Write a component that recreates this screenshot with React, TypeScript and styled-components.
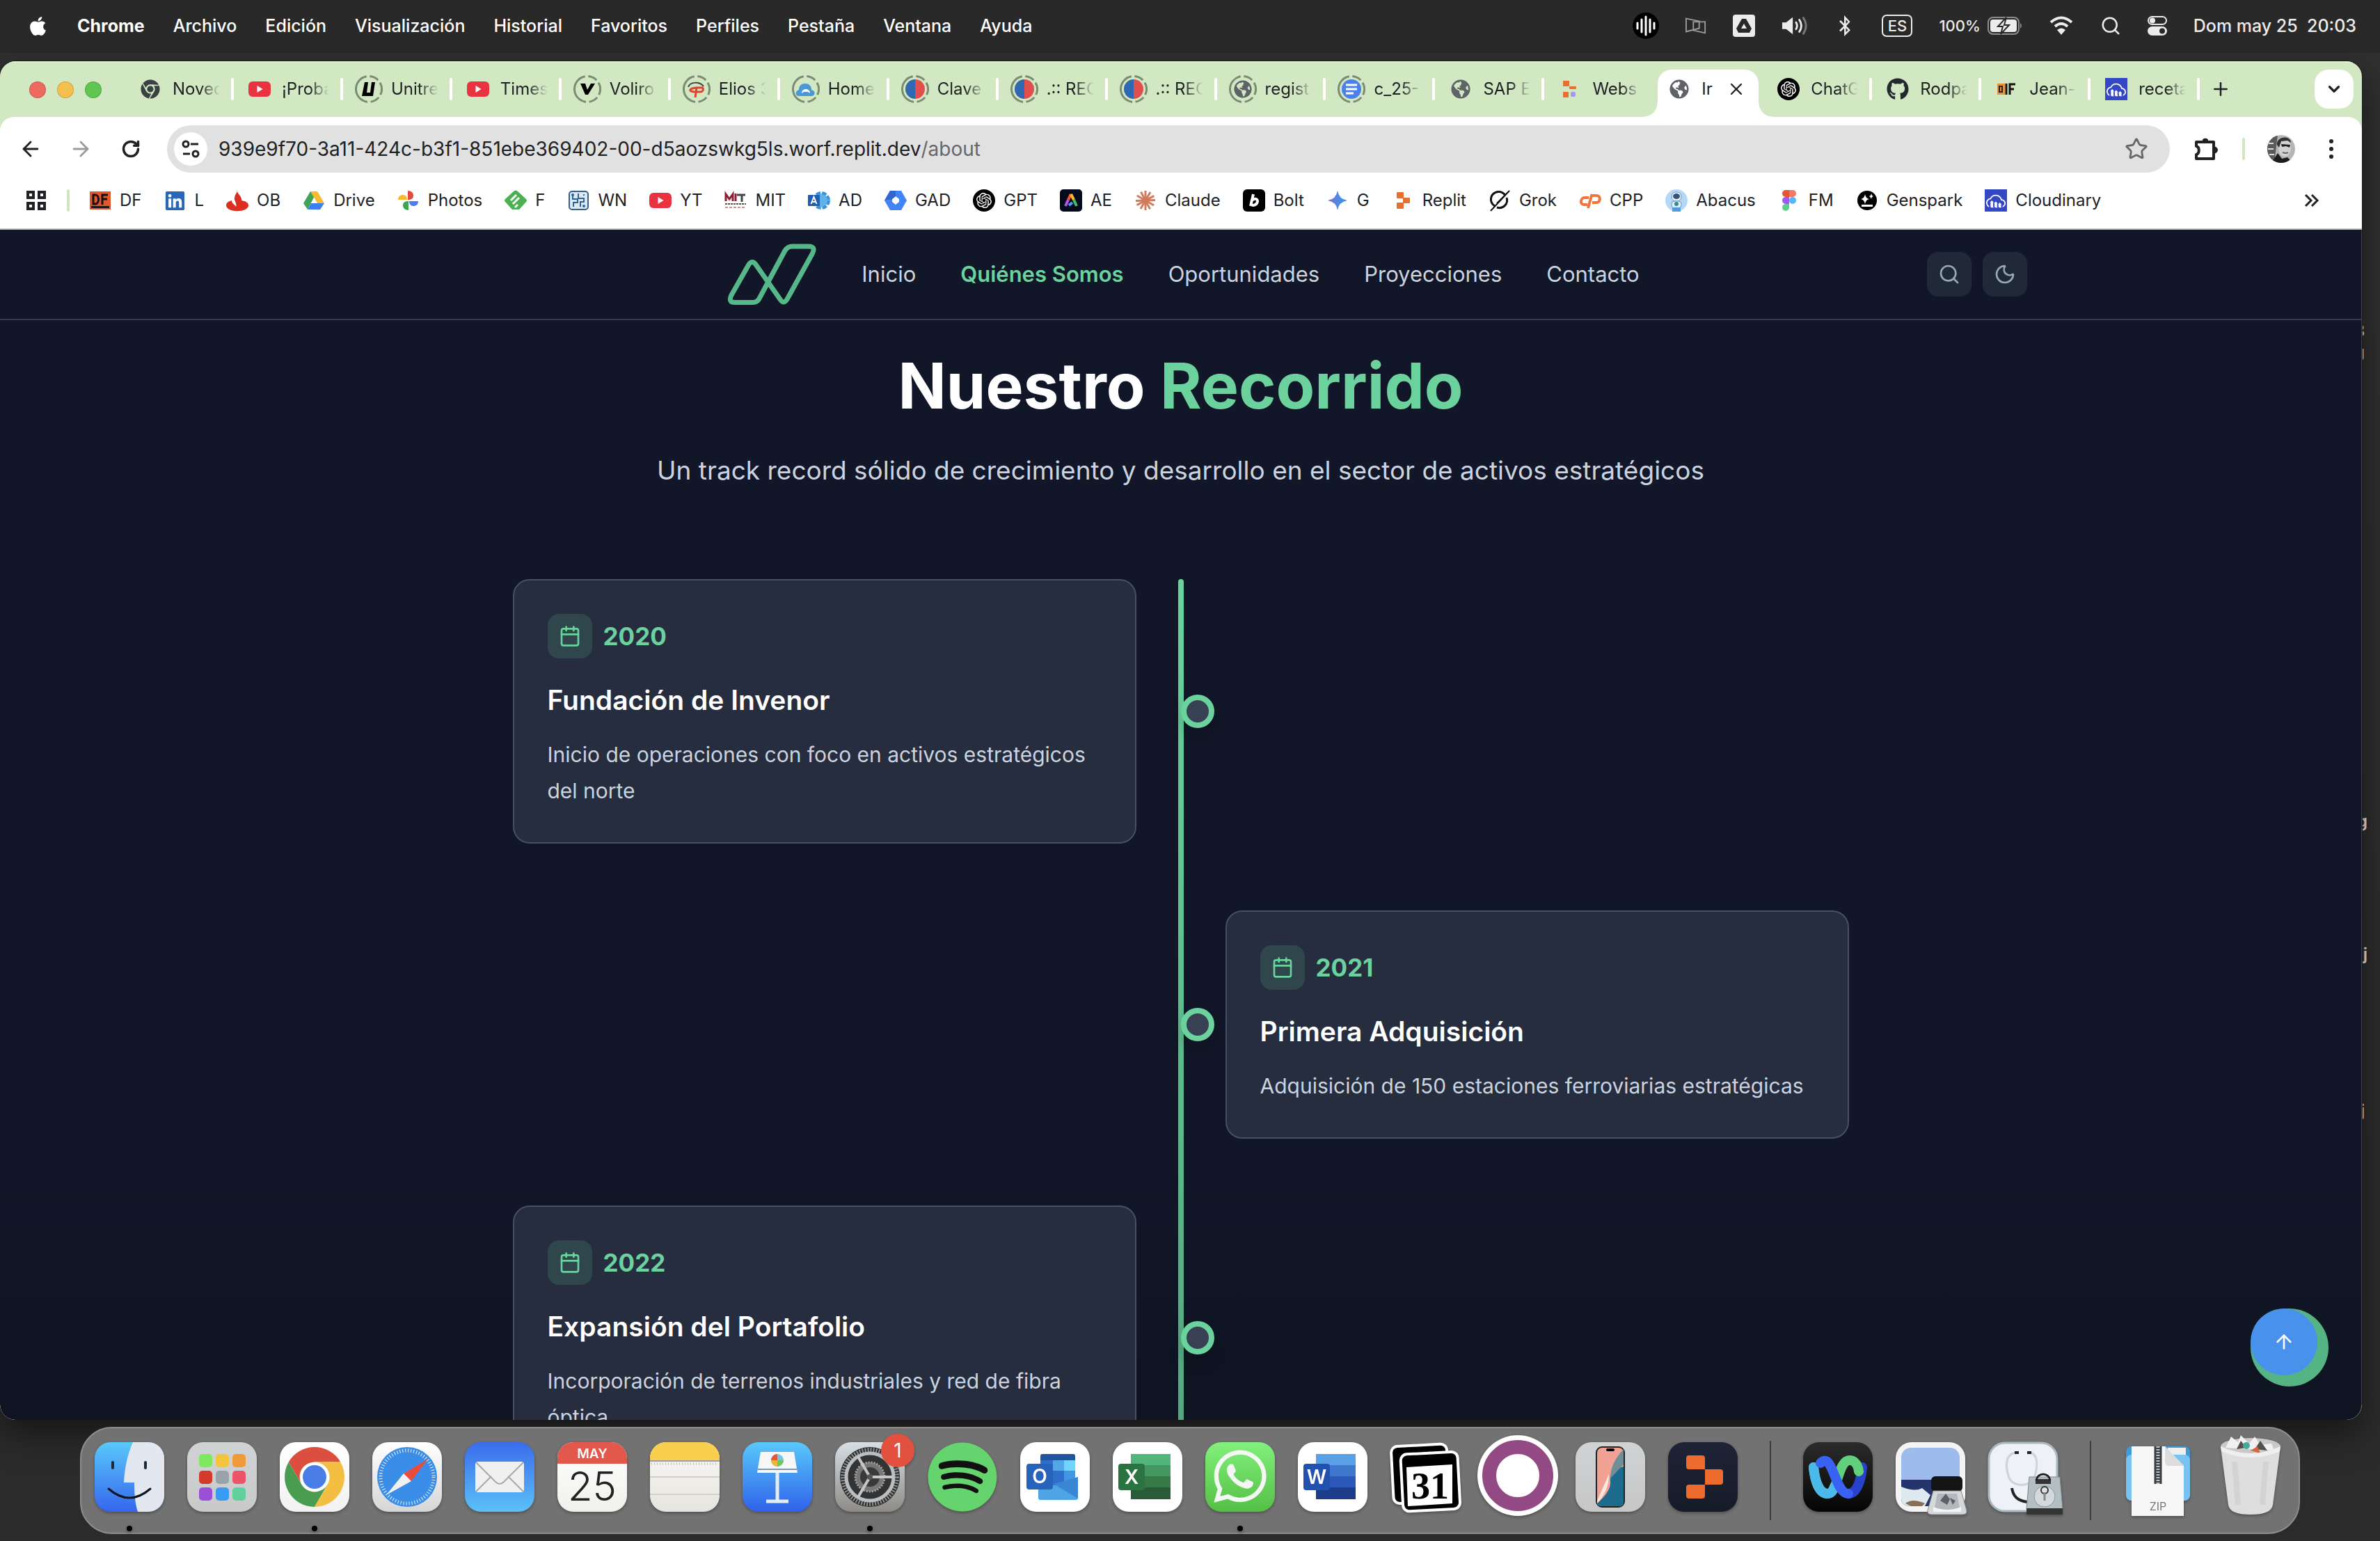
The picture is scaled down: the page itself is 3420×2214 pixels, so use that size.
import React from "react";
import styled, { createGlobalStyle } from "styled-components";
import {
  ArrowLeft,
  ArrowRight,
  ArrowUp,
  Calendar,
  ChevronDown,
  Moon,
  Plus,
  RotateCw,
  Search,
  Star,
  X,
} from "lucide-react";
import {
  FaApple,
  FaBluetoothB,
  FaChrome,
  FaGithub,
  FaGlobeAmericas,
  FaLinkedin,
  FaSpotify,
  FaWhatsapp,
} from "react-icons/fa";
import { SiCloudinary, SiOpenai } from "react-icons/si";

const GREEN = "#6bd29e";
const PAGE = "#111728";

const Global = createGlobalStyle`
  * { box-sizing: border-box; }
  html, body, #root { height: 100%; }
  body {
    margin: 0;
    overflow: hidden;
    background: #2d2d2d;
    font-family: Inter, "Liberation Sans", sans-serif;
  }
  button, input { font: inherit; color: inherit; border: 0; padding: 0; margin: 0; background: none; }
  a { color: inherit; text-decoration: none; }
  h1, h3, p { margin: 0; }
  svg { display: block; flex: none; }
`;

/* ---------- desktop ---------- */

const Desktop = styled.div`
  position: relative;
  display: flex;
  flex-direction: column;
  height: 100vh;
  padding-bottom: 10px;
  background: linear-gradient(#303030, #2d2d2d 60%, #2b2b2b);
`;

const FileLabel = styled.span<{ $y: number; $right: number }>`
  position: absolute;
  top: ${(p) => p.$y}px;
  right: ${(p) => p.$right}px;
  font-size: 24px;
  font-weight: 600;
  line-height: 28px;
  color: #e4e4e4;
`;

const MenuBar = styled.header`
  display: flex;
  align-items: center;
  justify-content: space-between;
  height: 76px;
  padding: 0 34px 2px 39px;
  background: #292929;
  color: #fff;
  font-size: 25px;
  line-height: 32px;
  flex: none;
`;

const Menus = styled.nav`
  display: flex;
  align-items: center;
  gap: 41px;
`;

const MenuButton = styled.button<{ $bold?: boolean }>`
  font-weight: ${(p) => (p.$bold ? 700 : 500)};
  white-space: nowrap;
`;

const Status = styled.div`
  display: flex;
  align-items: center;
  gap: 38px;
  color: #ececec;
`;

const InputSource = styled.span`
  width: 44px;
  height: 32px;
  border: 2px solid #ececec;
  border-radius: 7px;
  font-size: 22px;
  font-weight: 500;
  line-height: 28px;
  text-align: center;
`;

const Battery = styled.span`
  display: flex;
  align-items: center;
  gap: 10px;
  font-size: 22px;
  font-weight: 500;
`;

const Clock = styled.time`
  font-weight: 500;
  white-space: pre;
`;

/* ---------- browser window ---------- */

const Window = styled.section`
  position: relative;
  display: flex;
  flex-direction: column;
  flex: 1;
  min-height: 0;
  margin: 12px 26px 10px 0;
  border-radius: 22px;
  overflow: hidden;
  background: #d2e8c3;
  box-shadow: 0 0 0 1px #1a1a1a, 0 20px 50px rgba(0, 0, 0, 0.5);
`;

const TabStrip = styled.div`
  display: flex;
  height: 80px;
  padding: 10px 12px 0 42px;
  border-top: 2px solid #e3f1da;
  flex: none;
`;

const Lights = styled.div`
  display: flex;
  align-items: center;
  gap: 16px;
  height: 58px;
  margin-right: 31px;
`;

const Light = styled.button<{ $c: string }>`
  width: 24px;
  height: 24px;
  border-radius: 50%;
  background: ${(p) => p.$c};
  box-shadow: inset 0 0 0 1px rgba(0, 0, 0, 0.15);
`;

const Tabs = styled.div`
  display: flex;
  flex: 1;
  max-width: 2982px;
`;

const TabCell = styled.div`
  position: relative;
  display: flex;
  flex: 1 1 0;
  min-width: 0;
  height: 68px;
`;

const Tab = styled.button<{ $active?: boolean; $line?: boolean }>`
  position: relative;
  display: flex;
  align-items: center;
  flex: 1;
  min-width: 0;
  height: 68px;
  margin: ${(p) => (p.$active ? "0 4px 0 8px" : "0")};
  padding: 0 ${(p) => (p.$active ? 18 : 16)}px 12px ${(p) => (p.$active ? 15 : 23)}px;
  gap: 16px;
  border-radius: 20px 20px 0 0;
  background: ${(p) => (p.$active ? "#fff" : "transparent")};
  color: #202124;
  text-align: left;

  &::after {
    content: "";
    display: ${(p) => (p.$line ? "block" : "none")};
    width: 4px;
    height: 32px;
    margin-right: -18px;
    border-radius: 2px;
    background: #fff;
    flex: none;
  }
`;

const Flare = styled.i<{ $side: "left" | "right" }>`
  position: absolute;
  bottom: 0;
  width: 20px;
  height: 20px;
  ${(p) => (p.$side === "left" ? "left: -12px;" : "right: -16px;")}
  background: radial-gradient(
    circle at ${(p) => (p.$side === "left" ? "0 0" : "100% 0")},
    transparent 19px,
    #fff 20px
  );
`;

const Favicon = styled.span`
  display: flex;
  align-items: center;
  justify-content: center;
  width: 32px;
  height: 32px;
  flex: none;
`;

const TabTitle = styled.span`
  flex: 1;
  min-width: 0;
  overflow: hidden;
  white-space: nowrap;
  font-size: 24px;
  line-height: 32px;
  mask-image: linear-gradient(to right, #000 calc(100% - 28px), transparent);
`;

const ShortTitle = styled(TabTitle)`
  mask-image: none;
`;

const StripButton = styled.button<{ $filled?: boolean }>`
  display: flex;
  align-items: center;
  justify-content: center;
  width: 56px;
  height: 56px;
  margin-left: ${(p) => (p.$filled ? "auto" : "4px")};
  border-radius: 20px;
  background: ${(p) => (p.$filled ? "#fff" : "transparent")};
  color: #202124;
`;

const Chrome = styled.div`
  flex: none;
  border-radius: 20px 20px 0 0;
  border-bottom: 2px solid #c9c9c9;
  background: #fff;
  color: #202124;
`;

const Toolbar = styled.div`
  display: flex;
  align-items: center;
  height: 92px;
  padding: 0 24px;
`;

const ToolButton = styled.button<{ $dim?: boolean }>`
  display: flex;
  align-items: center;
  justify-content: center;
  width: 40px;
  height: 40px;
  color: ${(p) => (p.$dim ? "#9a9b9d" : "#202124")};
`;

const NavButtons = styled.div`
  display: flex;
  gap: 32px;
  margin-right: 32px;
`;

const UrlBar = styled.div`
  display: flex;
  align-items: center;
  flex: 1;
  height: 68px;
  padding: 0 28px 0 10px;
  border-radius: 34px;
  background: #e1e1e1;
  font-size: 28px;
`;

const SiteInfo = styled.button`
  display: flex;
  align-items: center;
  justify-content: center;
  width: 48px;
  height: 48px;
  margin-right: 16px;
  border-radius: 50%;
  background: #fff;
`;

const UrlInput = styled.input`
  field-sizing: content;
  outline: none;
`;

const UrlPath = styled.span`
  flex: 1;
  color: #66686b;
`;

const ToolRight = styled.div`
  display: flex;
  align-items: center;
  gap: 32px;
  padding-left: 32px;
`;

const Divider = styled.i`
  width: 4px;
  height: 32px;
  border-radius: 2px;
  background: #cfe6bf;
  flex: none;
`;

const Bookmarks = styled.nav`
  display: flex;
  align-items: center;
  gap: 28px;
  height: 68px;
  padding: 0 60px 12px 36px;
  font-size: 24px;
  line-height: 32px;
`;

const BookmarkList = styled.div`
  display: flex;
  align-items: center;
  flex: 1;
  gap: 32px;
`;

const Bookmark = styled.a`
  display: flex;
  align-items: center;
  gap: 12px;
  white-space: nowrap;
`;

/* ---------- site ---------- */

const Page = styled.main`
  position: relative;
  display: flex;
  flex-direction: column;
  flex: 1;
  min-height: 0;
  overflow: hidden;
  border-right: 1px solid #3a4256;
  border-radius: 0 0 22px 22px;
  background: linear-gradient(${PAGE} 80%, #0f1422);
  color: #fff;
`;

const SiteHeader = styled.header`
  flex: none;
  border-bottom: 2px solid #333c4d;
`;

const HeaderInner = styled.div`
  display: grid;
  grid-template-columns: 1fr auto 1fr;
  align-items: center;
  width: 100%;
  max-width: 2432px;
  height: 128px;
  margin: 0 auto;
`;

const Brand = styled.div`
  display: flex;
  align-items: center;
  grid-column: 2;
  gap: 64px;
  padding-left: 8px;
`;

const SiteNav = styled.nav`
  display: flex;
  gap: 64px;
  font-size: 31px;
  line-height: 48px;
`;

const NavLink = styled.a<{ $active?: boolean }>`
  color: ${(p) => (p.$active ? GREEN : "#cbd3df")};
  font-weight: ${(p) => (p.$active ? 600 : 400)};
`;

const HeaderTools = styled.div`
  display: flex;
  justify-content: flex-end;
  gap: 16px;
`;

const IconButton = styled.button`
  display: flex;
  align-items: center;
  justify-content: center;
  width: 64px;
  height: 64px;
  border-radius: 16px;
  background: #1f2938;
  color: #9aa5b5;
`;

const Section = styled.section`
  display: flex;
  flex-direction: column;
  align-items: center;
  flex: 1;
  min-height: 0;
  padding-top: 46px;
`;

const Heading = styled.h1`
  margin-bottom: 46px;
  font-size: 91px;
  font-weight: 700;
  line-height: 96px;
`;

const Accent = styled.span`
  color: ${GREEN};
`;

const Lead = styled.p`
  margin-bottom: 128px;
  color: #cbd3df;
  font-size: 37px;
  line-height: 56px;
`;

const Timeline = styled.ol`
  position: relative;
  display: flex;
  flex-direction: column;
  gap: 96px;
  width: 100%;
  max-width: 1920px;
  margin: 0;
  padding: 0 0 96px;
  list-style: none;

  &::before {
    content: "";
    position: absolute;
    top: 0;
    bottom: 0;
    left: calc(50% - 4px);
    width: 8px;
    border-radius: 4px;
    background: linear-gradient(${GREEN}, #4ea57a);
  }
`;

const Milestone = styled.li<{ $right?: boolean }>`
  position: relative;
  display: flex;
  justify-content: ${(p) => (p.$right ? "flex-end" : "flex-start")};
`;

const Dot = styled.i`
  position: absolute;
  top: calc(50% - 24px);
  left: 50%;
  width: 48px;
  height: 48px;
  border: 8px solid ${GREEN};
  border-radius: 50%;
  background: #374153;
  box-shadow: 0 12px 24px rgba(0, 0, 0, 0.18);
`;

const Card = styled.article`
  width: calc(50% - 64px);
  padding: 48px;
  border: 2px solid #465062;
  border-radius: 24px;
  background: #252d3f;
`;

const CardTop = styled.div`
  display: flex;
  align-items: center;
  gap: 16px;
  margin-bottom: 32px;
  color: ${GREEN};
`;

const IconTile = styled.span`
  display: flex;
  align-items: center;
  justify-content: center;
  width: 64px;
  height: 64px;
  border-radius: 16px;
  background: #2e464c;
`;

const Year = styled.span`
  font-size: 35px;
  font-weight: 700;
  line-height: 56px;
`;

const CardTitle = styled.h3`
  margin-bottom: 24px;
  font-size: 39px;
  font-weight: 600;
  line-height: 56px;
`;

const CardText = styled.p`
  color: #cbd3df;
  font-size: 30px;
  line-height: 52px;
`;

const TopRing = styled.div`
  position: absolute;
  right: 47px;
  bottom: 48px;
  width: 112px;
  height: 112px;
  border-radius: 50%;
  background: #56b384;
`;

const TopButton = styled.button`
  display: flex;
  align-items: center;
  justify-content: center;
  width: 96px;
  height: 96px;
  border-radius: 50%;
  background: #4992ec;
  color: #fff;
`;

/* ---------- dock ---------- */

const Dock = styled.footer`
  position: relative;
  display: flex;
  align-items: flex-start;
  align-self: center;
  gap: 33px;
  height: 154px;
  padding: 20px 19px 0;
  border: 2px solid #8c8c8c;
  border-radius: 46px;
  background: #727272;
  flex: none;
`;

const DockItem = styled.button<{ $open?: boolean }>`
  position: relative;
  display: flex;
  flex-direction: column;
  align-items: center;
  gap: 20px;
  width: 100px;
  filter: drop-shadow(0 2px 2px rgba(0, 0, 0, 0.3));

  > svg { overflow: visible; }

  &::after {
    content: "";
    width: 8px;
    height: 8px;
    border-radius: 50%;
    background: ${(p) => (p.$open ? "#000" : "transparent")};
  }
`;

const DockRule = styled.i`
  width: 2px;
  height: 114px;
  margin: -2px 13px 0;
  background: #3e3e3e;
`;

const Badge = styled.span`
  position: absolute;
  top: -12px;
  right: -14px;
  width: 48px;
  height: 48px;
  border-radius: 50%;
  background: #e25140;
  color: #fff;
  font-size: 28px;
  line-height: 48px;
  text-align: center;
`;

/* ---------- drawings ---------- */

type SvgBoxProps = { w?: number; h?: number; vb?: string; children: React.ReactNode };
const Svg = ({ w = 32, h = w, vb = "0 0 32 32", children }: SvgBoxProps) => (
  <svg width={w} height={h} viewBox={vb} fill="none" aria-hidden="true">
    {children}
  </svg>
);

const YouTubeMark = () => (
  <Svg>
    <rect y="5" width="32" height="22" rx="6" fill="#ea3340" />
    <path d="M12.500 11v10l8-5z" fill="#fff" />
  </Svg>
);

const Replit = () => (
  <Svg>
    <rect x="7" y="4" width="10" height="9" rx="1" fill="#e8702f" />
    <rect x="16" y="12" width="10" height="8" rx="1" fill="#e8702f" />
    <rect x="7" y="19" width="10" height="9" rx="1" fill="#e8702f" />
  </Svg>
);

const ReplitTab = () => (
  <Svg>
    <rect x="6" y="4" width="9" height="8" rx="1" fill="#e8702f" />
    <rect x="15" y="12" width="10" height="4" rx="1" fill="#e8702f" />
    <rect x="6" y="20" width="8" height="8" rx="1" fill="#e8702f" />
    <rect x="17" y="20" width="7" height="7" rx="2" fill="#a996f0" />
  </Svg>
);

const Cloudinary = () => (
  <Svg>
    <rect width="32" height="32" fill="#3448c5" />
    <svg x="2" y="3" width="28" height="28" viewBox="0 0 28 28">
      <SiCloudinary size={28} color="#fff" />
    </svg>
  </Svg>
);

const Gpt = () => (
  <Svg>
    <circle cx="16" cy="16" r="16" fill="#000" />
    <svg x="5" y="5" width="22" height="22" viewBox="0 0 22 22">
      <SiOpenai size={22} color="#fff" />
    </svg>
  </Svg>
);

const Ringed = ({ children }: { children: React.ReactNode }) => (
  <Svg w={40} vb="0 0 40 40">
    <circle
      cx="20"
      cy="20"
      r="18.500"
      stroke="#7c8b73"
      strokeWidth="3"
      pathLength={360}
      strokeDasharray="42 14 164 14 42 14 56 14"
      transform="rotate(40 20 20)"
    />
    {children}
  </Svg>
);

const UnitreeMark = () => (
  <Ringed>
    <path d="M14 10h5l-2 15h5l2-15h5l-3 20H10z" fill="#000" />
  </Ringed>
);
const VoliroMark = () => (
  <Ringed>
    <path d="M10 12h7l3 9 5-9h6l-10 16h-4z" fill="#000" />
  </Ringed>
);
const EliosMark = () => (
  <Ringed>
    <path d="M8 17c3-8 16-8 22-1" stroke="#444" strokeWidth="2" />
    <path d="M30 18H20c-12 1-12 6-2 6h7c5 0 6-6 2-6M20 18l-2 14" stroke="#e0432f" strokeWidth="3" />
  </Ringed>
);
const HomeMark = () => (
  <Ringed>
    <path d="M9 30c-5-1-4-8 1-9 0-6 4-9 9-9 6 0 9 4 9 9 6 1 6 8 1 9z" fill="#4a97d6" />
    <path d="M14 26c0-4 3-6 6-6s6 2 6 6l-3-2h-6z" fill="#fff" />
  </Ringed>
);
const ClaveMark = () => (
  <Ringed>
    <path d="M20 6a14 14 0 0 0 0 28z" fill="#2f68b1" />
    <path d="M20 6a14 14 0 0 1 0 28z" fill="#e04f4b" />
  </Ringed>
);
const GlobeRing = () => (
  <Ringed>
    <svg x="7" y="7" width="26" height="26" viewBox="0 0 26 26">
      <FaGlobeAmericas size={26} color="#5f6368" />
    </svg>
  </Ringed>
);
const DocMark = () => (
  <Ringed>
    <circle cx="20" cy="20" r="14" fill="#4a80ee" />
    <path d="M12 14h16M12 20h16M12 26h11" stroke="#fff" strokeWidth="3" />
  </Ringed>
);
const JeanMark = () => (
  <Svg>
    <rect x="2" y="8" width="11" height="16" fill="#e8923a" />
    <path d="M5 12h4v8H5z" stroke="#222" strokeWidth="2" />
    <path d="M15 8v16M20 24V9h8M20 16h6" stroke="#111" strokeWidth="3" />
  </Svg>
);
const Globe = () => <FaGlobeAmericas size={28} color="#5f6368" />;

const DfMark = () => (
  <Svg>
    <rect x="1" y="3" width="30" height="26" fill="#e4572e" />
    <path d="M6 8v13h3c6 0 6-13 0-13zM19 22V8h8M19 14h7" stroke="#111" strokeWidth="3" />
    <rect x="3" y="24" width="26" height="3" fill="#1b1b1b" />
  </Svg>
);
const FlameMark = () => (
  <Svg>
    <path d="M16 0c-2 6 7 9 6 16 6 1 10 3 10 7 0 11-32 11-32 0 0-4 4-6 8-7 0 5 5 6 6 9 2-5-3-8-2-13 1-6 4-6 4-12z" fill="#dc2f21" />
  </Svg>
);
const DriveMark = () => (
  <Svg>
    <path d="M11 3h10l-5 9-9 17-6-9z" fill="#3fa457" />
    <path d="M11 3h10l10 17H21z" fill="#f6bb2d" />
    <path d="M7 29l5-9h19l-6 9z" fill="#3f7ef0" />
    <path d="M16 12l5 8h-9z" fill="#fff" />
  </Svg>
);
const PhotosMark = () => (
  <Svg>
    <path d="M15 2c5 0 8 3 8 7s-3 6-8 6z" fill="#e4493b" />
    <path d="M30 17c0 5-3 7-7 7s-6-3-6-7z" fill="#4680ee" />
    <path d="M16 30c-5 0-8-3-8-7s3-6 8-6z" fill="#3fa457" />
    <path d="M1 15c0-5 3-7 7-7s6 3 6 7z" fill="#f6bb2d" />
  </Svg>
);
const FeedlyMark = () => (
  <Svg>
    <path d="M13 3q3-3 6 0l12 11q2 2 0 4L21 29H11L1 18q-2-2 0-4z" fill="#4caf50" />
    <path d="M9 16l8-8M12 21l9-9M15 26l4-4" stroke="#fff" strokeWidth="3" />
  </Svg>
);
const CircuitMark = () => (
  <Svg>
    <rect x="3" y="3" width="27" height="26" rx="4" fill="#dce9f4" stroke="#33618d" strokeWidth="2" />
    <path d="M8 8v6h7v5H9v6M16 6v7h8v5h-5v7M24 7v2" stroke="#33618d" strokeWidth="2" />
    <circle cx="8" cy="8" r="2" fill="#33618d" />
    <circle cx="24" cy="24" r="2" fill="#33618d" />
  </Svg>
);
const MitMark = () => (
  <Svg>
    <path d="M2 17V7l5 7 5-7v10M16 6v11" stroke="#8a1f35" strokeWidth="3" />
    <path d="M18 8h12M25 8v10" stroke="#444" strokeWidth="3" />
    <path d="M1 21h30" stroke="#555" strokeWidth="2" strokeDasharray="3 1" />
    <path d="M1 26h30" stroke="#d98b8b" strokeWidth="2" strokeDasharray="4 2" />
  </Svg>
);
const AzureMark = () => (
  <Svg>
    <circle cx="19" cy="16" r="10" fill="#8fc6ee" stroke="#3a93dc" strokeWidth="6" strokeDasharray="6 2" />
    <circle cx="19" cy="16" r="9" fill="#5fb2ea" />
    <rect y="8" width="17" height="16" rx="1" fill="#1d5fb0" />
    <path d="M4.500 21L8.500 11l4 10M6 18h5" stroke="#fff" strokeWidth="2" />
  </Svg>
);
const HexMark = () => (
  <Svg>
    <path fillRule="evenodd" d="M8 2h16l8 14-8 14H8L0 16zM16 10l-5 4v4l5 4 5-4v-4z" fill="#4284f3" />
    <path d="M8 2h8v8l-5 4-11 2z" fill="#2f66d0" />
  </Svg>
);
const AeMark = () => (
  <Svg>
    <rect width="32" height="32" rx="5" fill="#050a1c" />
    <path d="M16 7l-4 8" stroke="#f5552e" strokeWidth="4" />
    <path d="M12 15l-4 9" stroke="#b457e8" strokeWidth="4" />
    <path d="M16 7l4 8" stroke="#f6b82f" strokeWidth="4" />
    <path d="M20 15l4 9" stroke="#3fc06a" strokeWidth="4" />
    <path d="M13 23l5-4" stroke="#4a9bf5" strokeWidth="4" />
  </Svg>
);
const ClaudeMark = () => (
  <Svg>
    {[0, 30, 62, 88, 120, 152].map((a) => (
      <path key={a} d="M16 2v28" stroke="#d07b5b" strokeWidth="3" transform={`rotate(${a} 16 16)`} />
    ))}
  </Svg>
);
const BoltMark = () => (
  <Svg>
    <rect width="32" height="32" rx="6" fill="#000" />
    <path d="M15 7l-4 17M12 19c1-6 9-7 9-2s-7 8-10 4" stroke="#fff" strokeWidth="4" />
  </Svg>
);
const GeminiMark = () => (
  <Svg>
    <defs>
      <linearGradient id="gem" x1="0" x2="1">
        <stop stopColor="#7f6fc4" />
        <stop offset="0.6" stopColor="#4a8be6" />
      </linearGradient>
    </defs>
    <path d="M16 2q2 12 14 14-12 2-14 14-2-12-14-14 12-2 14-14z" fill="url(#gem)" />
  </Svg>
);
const GrokMark = () => (
  <Svg>
    <path d="M24 9A11 11 0 1 0 9 24M12 26A11 11 0 0 0 26 12" stroke="#111" strokeWidth="3" />
    <path d="M3 31L30 2 12 20" stroke="#111" strokeWidth="2" />
  </Svg>
);
const CpMark = () => (
  <Svg>
    <path d="M14 12H8c-6 0-7 10-1 10h5M13 27l5-18h7c7 0 6 10 0 10h-6" stroke="#f0743c" strokeWidth="4" />
  </Svg>
);
const AbacusMark = () => (
  <Svg>
    <circle cx="16" cy="16" r="16" fill="#b5d8f6" />
    <rect x="9" y="4" width="14" height="13" rx="6" fill="#eef5fb" stroke="#6c93bb" />
    <ellipse cx="16" cy="10" rx="5" ry="4" fill="#33527c" />
    <rect x="9" y="17" width="14" height="10" rx="4" fill="#e4eef8" stroke="#6c93bb" />
    <circle cx="16" cy="21" r="3" fill="#2b8f8a" />
    <path d="M10 26h12v6H10z" fill="#4d9be0" />
  </Svg>
);
const FigmaMark = () => (
  <Svg>
    <path d="M16 1h-5a5 5 0 0 0 0 10h5z" fill="#e4572e" />
    <path d="M16 1h5a5 5 0 0 1 0 10h-5z" fill="#f0776a" />
    <path d="M16 11h-5a5 5 0 0 0 0 10h5z" fill="#9a5cf5" />
    <circle cx="21" cy="16" r="5" fill="#55b6f8" />
    <path d="M16 21h-5a5 5 0 1 0 5 5z" fill="#5ccf8b" />
  </Svg>
);
const GensparkMark = () => (
  <Svg>
    <circle cx="16" cy="16" r="14" fill="#000" />
    <path d="M13 7q1 6 6 7-5 1-6 7-1-6-6-7 5-1 6-7zM22 6q.500 3 3 4-2.500.500-3 4-.500-3-3-4 2.500-.500 3-4zM8 22h16v3H8z" fill="#fff" />
  </Svg>
);

const Apps = () => (
  <Svg w={32}>
    <path d="M4 4h8v8H4zM20 4h8v8h-8zM4 20h8v8H4zM20 20h8v8h-8z" stroke="#202124" strokeWidth="4" />
  </Svg>
);

const Tune = () => (
  <Svg w={32}>
    <g stroke="#202124" strokeWidth="3">
      <circle cx="9" cy="9" r="4" />
      <path d="M16 9h11M5 23h10" />
      <circle cx="23" cy="23" r="4" />
    </g>
  </Svg>
);

const Puzzle = () => (
  <Svg w={36} vb="0 0 36 36">
    <path d="M4 8h25v24H4v-6c5-1 5-11 0-12z" stroke="#202124" strokeWidth="4" strokeLinejoin="round" />
    <path d="M13 7a4 4 0 0 1 8 0zM30 15a4 4 0 0 1 0 9z" fill="#202124" stroke="#202124" />
  </Svg>
);

const Portrait = () => (
  <Svg w={40} vb="0 0 40 40">
    <defs>
      <clipPath id="face">
        <circle cx="20" cy="20" r="20" />
      </clipPath>
    </defs>
    <g clipPath="url(#face)">
      <rect width="40" height="40" fill="#b5b5b5" />
      <path d="M0 0h15L10 40H0z" fill="#5a5a5a" />
      <path d="M2 12h7M1 20h8M3 28h7" stroke="#ddd" strokeWidth="2" />
      <ellipse cx="25" cy="18" rx="9" ry="13" fill="#d2d2d2" />
      <path d="M14 14C13 1 34 0 34 11l-5-3-9 1-3 9z" fill="#333" />
      <path d="M20 13l13 1-1 4-5-2-6 1z" fill="#222" />
      <path d="M22 25q5 2 8 0" stroke="#666" strokeWidth="2" />
      <path d="M6 40l9-14 6 8 8-2 8 8z" fill="#1c1c1c" />
    </g>
  </Svg>
);

const Kebab = () => (
  <Svg w={32}>
    <g fill="#202124">
      <circle cx="16" cy="5" r="3" />
      <circle cx="16" cy="16" r="3" />
      <circle cx="16" cy="27" r="3" />
    </g>
  </Svg>
);

const BrandMark = () => (
  <Svg w={129} h={89} vb="0 0 129 89">
    <path
      d="M93 4H117Q128 4 122 15L86 80Q81 88 76 80L41 30Q36 23 31 30L6 74Q1 84.500 11 84.500H37Q43 84.500 46 79L83 10Q87 4 93 4Z"
      stroke="#56b888"
      strokeWidth="7"
      strokeLinejoin="round"
    />
  </Svg>
);

/* menu bar glyphs */
const Wave = () => (
  <Svg w={38} vb="0 0 38 38">
    <circle cx="19" cy="19" r="19" fill="#000" />
    <path d="M7 15v8M13 10v18M19 6v26M25 10v18M31 15v8" stroke="#fff" strokeWidth="3" strokeLinecap="round" />
  </Svg>
);
const Frames = () => (
  <Svg w={30}>
    <path d="M1 5l20 4v11L1 25zM12 10h18v17l-18-4z" stroke="#9c9c9c" strokeWidth="2" />
  </Svg>
);
const DriveTray = () => (
  <Svg>
    <rect width="32" height="32" rx="4" fill="#ececec" />
    <path d="M13 6h6l8 14-3 6H8l-3-6z" fill="#292929" />
    <path d="M16 13l4 7h-8z" fill="#ececec" />
  </Svg>
);
const Volume = () => (
  <Svg w={38} h={32} vb="0 0 40 32">
    <path d="M1 11h6l10-8v26L7 21H1z" fill="#ececec" />
    <path d="M22 11q3 5 0 10M27 7q6 9 0 18" stroke="#ececec" strokeWidth="3" strokeLinecap="round" />
    <path d="M33 4q8 12 0 24" stroke="#777" strokeWidth="3" strokeLinecap="round" />
  </Svg>
);
const BatteryIcon = () => (
  <Svg w={50} h={26} vb="0 0 50 26">
    <rect x="1" y="1" width="44" height="24" rx="7" stroke="#8d8d8d" strokeWidth="2" />
    <rect x="4" y="4" width="38" height="18" rx="4" fill="#ececec" />
    <path d="M47 9q4 4 0 8z" fill="#8d8d8d" />
    <path d="M27 1L15 14h7l-3 11 12-13h-7z" fill="#ececec" stroke="#292929" strokeWidth="2" />
  </Svg>
);
const Wifi = () => (
  <Svg w={36} h={28} vb="0 0 36 28">
    <path d="M3 9q15-13 30 0M9 15q9-8 18 0" stroke="#ececec" strokeWidth="4" />
    <path d="M12 20q6-5 12 0l-6 7z" fill="#ececec" />
  </Svg>
);
const Toggles = () => (
  <Svg w={28} vb="0 0 28 28">
    <rect x="1" y="1" width="26" height="11" rx="5.500" stroke="#ececec" strokeWidth="2" />
    <circle cx="7" cy="6.500" r="4" fill="#ececec" />
    <rect y="15" width="28" height="13" rx="6.500" fill="#ececec" />
    <circle cx="21" cy="21.500" r="4" fill="#292929" />
  </Svg>
);

/* dock glyphs */
type Grad = { id: string; a: string; b: string };
const Vertical = ({ id, a, b }: Grad) => (
  <linearGradient id={id} x1="0" y1="0" x2="0" y2="1">
    <stop stopColor={a} />
    <stop offset="1" stopColor={b} />
  </linearGradient>
);

const Tile = ({ id, a, b, children }: Grad & { children?: React.ReactNode }) => (
  <Svg w={100} vb="0 0 100 100">
    <defs>
      <Vertical id={id} a={a} b={b} />
      <clipPath id={id + "-clip"}>
        <rect width="100" height="100" rx="23" />
      </clipPath>
    </defs>
    <g clipPath={`url(#${id}-clip)`}>
      <rect width="100" height="100" fill={`url(#${id})`} />
      {children}
    </g>
  </Svg>
);

const Finder = () => (
  <Tile id="finder" a="#5ac8fa" b="#3566ee">
    <path d="M55 0C47 18 43 38 42 58h15c0 16 1 30 5 42h38V0z" fill="#e3e8f0" />
    <path d="M26 29v8M73 29v8" stroke="#1c2a3a" strokeWidth="4" strokeLinecap="round" />
    <path d="M20 67q30 26 60 0" stroke="#0d1722" strokeWidth="3" strokeLinecap="round" />
  </Tile>
);

const pads = ["#7ee85f", "#f3c53c", "#ef9a36", "#d43a2a", "#9aa4a8", "#ec5468", "#9a4fd6", "#3a9bf5", "#62cf9f"];
const Launchpad = () => (
  <Tile id="launch" a="#d0d3d5" b="#c9c9c9">
    {pads.map((c, i) => (
      <rect key={c} x={17 + (i % 3) * 24} y={17 + Math.floor(i / 3) * 24} width="19" height="19" rx="5" fill={c} />
    ))}
  </Tile>
);

const ChromeApp = () => (
  <Tile id="chrome" a="#ffffff" b="#f2f2f2">
    <g transform="translate(50 50)">
      <path d="M37.200-21.500A43 43 0 0 0-37.200-21.500L-18.600 10.700 0 0V-21.500z" fill="#dc4e3e" />
      <path d="M-37.200-21.500A43 43 0 0 0 0 43L18.600 10.700 0 0-18.600 10.700z" fill="#4a9c51" />
      <path d="M0 43A43 43 0 0 0 37.200-21.500H0V0L18.600 10.700z" fill="#f3bf42" />
      <circle r="21.500" fill="#fff" />
      <circle r="17" fill="#4a7de8" />
    </g>
  </Tile>
);

const Safari = () => (
  <Tile id="safari" a="#ffffff" b="#d6d6d6">
    <circle cx="50" cy="50" r="43" fill="#3b8ee8" />
    <circle cx="50" cy="50" r="38" stroke="#e9f4ff" strokeWidth="5" strokeDasharray="1 3" />
    <path d="M80 24L56 56 45 45z" fill="#e94b3f" />
    <path d="M20 76l25-31 11 11z" fill="#f1f1f1" />
  </Tile>
);

const Mail = () => (
  <Tile id="mail" a="#3a6cec" b="#5bc1f8">
    <rect x="15" y="28" width="70" height="44" rx="4" fill="#f0f0f0" />
    <path d="M16 71l22-22M84 71L62 49M16 29l28 28q6 6 12 0l28-28" stroke="#a9a9a9" strokeWidth="2" />
  </Tile>
);

const SvgText = styled.text`
  font-family: Inter, "Liberation Sans", sans-serif;
  text-anchor: middle;
`;

const CalendarApp = () => (
  <Tile id="cal" a="#ffffff" b="#f1f0ec">
    <rect width="100" height="31" fill="#e2584d" />
    <SvgText x="50" y="23" fontSize="19" fontWeight="600" fill="#fff">MAY</SvgText>
    <SvgText x="50" y="84" fontSize="58" fontWeight="300" fill="#222">25</SvgText>
  </Tile>
);

const Notes = () => (
  <Tile id="notes" a="#faf9f6" b="#e5e4de">
    <rect width="100" height="26" fill="#f8cf4e" />
    <path d="M0 27h100" stroke="#a19f98" strokeWidth="2" />
    <path d="M2 31h96" stroke="#b9b7b0" strokeWidth="3" strokeDasharray="1 3" />
    <path d="M0 50h100M0 75h100" stroke="#cfcfcf" strokeWidth="2" />
  </Tile>
);

const Keynote = () => (
  <Tile id="keynote" a="#5ac8fa" b="#2f62ea">
    <path d="M26 14h48l5 30H21z" fill="#f7f7f7" />
    <path d="M22 39h56" stroke="#7d95ad" strokeWidth="2" />
    <path d="M50 44v42M34 85h32" stroke="#e6ecf3" strokeWidth="5" />
    <circle cx="50" cy="26" r="9" fill="#6fc7ee" />
    <path d="M50 26V17a9 9 0 0 0-9 9z" fill="#e8553f" />
    <path d="M50 26h-9a9 9 0 0 0 9 9z" fill="#f4b43c" />
    <path d="M50 26v9a9 9 0 0 0 9-9z" fill="#6cc763" />
  </Tile>
);

const Settings = () => (
  <Tile id="settings" a="#d5dfe5" b="#8e8b87">
    <circle cx="50" cy="50" r="43" fill="#2a2a2a" />
    <circle cx="50" cy="50" r="39" stroke="#8f8f8f" strokeWidth="6" strokeDasharray="2 2" />
    <circle cx="50" cy="50" r="34" fill="#333" stroke="#b9bec2" strokeWidth="5" />
    <circle cx="50" cy="50" r="21" fill="#777" stroke="#a5a5a5" strokeWidth="3" strokeDasharray="2 2" />
    <circle cx="50" cy="50" r="14" fill="#3a3a3a" />
    <path d="M50 50h33M50 50L33 21M50 50L33 79" stroke="#c3c7ca" strokeWidth="4" />
    <circle cx="50" cy="50" r="4" fill="#555" />
  </Tile>
);

const Spotify = () => (
  <Svg w={100} vb="0 0 100 100">
    <circle cx="50" cy="50" r="46" fill="#111" />
    <svg x="-1" y="-1" width="102" height="102" viewBox="0 0 102 102">
      <FaSpotify size={102} color="#65d36e" />
    </svg>
  </Svg>
);

const Office = ({ id, letter, rows, tag }: { id: string; letter: string; rows: string[]; tag: string }) => (
  <Tile id={id} a="#ffffff" b="#ffffff">
    {rows.map((c, i) => (
      <rect key={c} x="26" y={17 + i * 16} width="57" height="17" fill={c} />
    ))}
    <rect x="8" y="31" width="38" height="38" rx="4" fill={tag} />
    <SvgText x="27" y="60" fontSize="28" fontWeight="600" fill="#fff">{letter}</SvgText>
  </Tile>
);

const Outlook = () => (
  <Tile id="outlook" a="#ffffff" b="#ffffff">
    <rect x="29" y="17" width="50" height="14" rx="3" fill="#2255a0" />
    <path d="M29 26h18v22H29z" fill="#2f6fcb" />
    <path d="M47 26h16v15H47z" fill="#52a7e8" />
    <path d="M63 26h16v15H63z" fill="#72d4fb" />
    <path d="M47 41h16v22H47z" fill="#2f6fcb" />
    <path d="M63 41h16v18H63z" fill="#4596e2" />
    <path d="M26 62h28l29-11v29q0 3-3 3H29q-3 0-3-3z" fill="#4fa4e6" />
    <path d="M48 60l35 21V50z" fill="#3b85d5" />
    <rect x="9" y="31" width="38" height="37" rx="4" fill="#2762bb" />
    <SvgText x="28" y="59" fontSize="28" fontWeight="600" fill="#fff">O</SvgText>
  </Tile>
);

const Whatsapp = () => (
  <Tile id="wa" a="#82f07c" b="#55bf45">
    <svg x="7" y="6" width="86" height="86" viewBox="0 0 86 86">
      <FaWhatsapp size={86} color="#f5f7f5" />
    </svg>
  </Tile>
);

const NotionCalendar = () => (
  <Svg w={100} vb="0 0 100 100">
    <rect x="3" y="4" width="80" height="82" rx="9" fill="#000" stroke="#fff" strokeWidth="4" transform="rotate(-3 50 50)" />
    <rect x="16" y="16" width="82" height="82" rx="9" fill="#000" stroke="#fff" strokeWidth="4" transform="rotate(-3 50 50)" />
    <path d="M23 36l66-4v56l-64 4z" fill="#fff" />
    <text x="57" y="81" fontSize="54" fontWeight="700" textAnchor="middle" fontFamily="Liberation Serif, serif" fill="#000">31</text>
  </Svg>
);

const RingApp = () => (
  <Svg w={100} vb="0 0 100 100">
    <circle cx="50" cy="48" r="58" fill="#fff" />
    <circle cx="50" cy="48" r="41" stroke="#934a84" strokeWidth="20" />
  </Svg>
);

const Mirroring = () => (
  <Tile id="mirror" a="#d0d3d5" b="#c6c6c6">
    <rect x="30" y="7" width="40" height="86" rx="8" fill="#f2a294" stroke="#222" strokeWidth="2" />
    <path d="M69 35Q48 40 50 55T31 88q0 4 5 4h28q5 0 5-6z" fill="#1c6a8c" />
    <path d="M69 10Q50 30 50 52l19-20z" fill="#6f8f97" />
    <path d="M31 88Q48 70 48 46L31 84z" fill="#fbe6e0" />
    <rect x="44" y="9" width="12" height="4" rx="2" fill="#000" />
  </Tile>
);

const ReplitApp = () => (
  <Tile id="replit" a="#1e2436" b="#161b29">
    <path d="M30 19h19q4 0 4 4v16H30q-4 0-4-4V23q0-4 4-4zM53 39h22q4 0 4 4v14q0 4-4 4H53zM30 61h23v16q0 4-4 4H30q-4 0-4-4V65q0-4 4-4z" fill="#ec6b2d" />
  </Tile>
);

const Webex = () => (
  <Tile id="webex" a="#2b2b2b" b="#050505">
    <g strokeWidth="14" strokeLinecap="round">
      <path d="M85 36c-2 20-8 38-20 38" stroke="#2743c9" />
      <path d="M15 36c2 20 8 38 20 38 16 0 14-48 32-48 8 0 12 8 13 16" stroke="#62cf7c" />
      <path d="M15 36c2 20 8 38 20 38 5 0 8-4 10-10" stroke="#4cb9ea" />
      <path d="M25 30c18-18 20 44 40 44" stroke="#3a62f2" />
    </g>
  </Tile>
);

const Preview = () => (
  <Svg w={100} vb="0 0 100 100">
    <rect width="100" height="100" rx="23" fill="#f4f4f4" />
    <rect x="8" y="8" width="84" height="84" rx="14" fill="#9dbcec" />
    <path d="M8 54h84v26q0 12-12 12H22Q8 92 8 80z" fill="#24356e" />
    <path d="M8 64q20 8 30 2l12 10-8 16H22Q8 92 8 80z" fill="#dfe9f0" />
    <path d="M14 88q10-8 28 0l-4 4H22z" fill="#8a6f58" />
    <rect x="51" y="49" width="45" height="22" rx="6" fill="#151515" />
    <path d="M54 70h40l8 28q1 6-6 6H52q-7 0-6-6z" fill="#d5d8da" stroke="#888" />
    <path d="M60 74h28l4 20q-18 8-36 0z" fill="#b4b7bc" />
    <path d="M64 84l8-10 6 8-4 8zM78 80l8 4-4 6z" fill="#5d6068" />
    <path d="M54 93q20 8 40 0v7H54z" fill="#f4f4f4" />
  </Svg>
);

const DiskUtility = () => (
  <Svg w={100} vb="0 0 100 100">
    <rect x="1" y="1" width="98" height="98" rx="23" fill="#eef1f6" stroke="#a9b9c4" strokeWidth="3" />
    <path d="M42 15c-18 0-18 20-12 36 6 14 30 14 36 0 6-16 6-36-8-36" stroke="#cfd3d8" strokeWidth="3" />
    <path d="M38 15h6M56 15h6M34 66c2 12 8 18 22 20" stroke="#222" strokeWidth="4" />
    <path d="M59 50h44l4 46H55z" fill="#b4bfc4" stroke="#7d868a" />
    <rect x="55" y="95" width="52" height="9" fill="#333" />
    <circle cx="81" cy="78" r="15" fill="#d3d9dc" stroke="#8d979b" />
    <rect x="68" y="53" width="22" height="7" fill="#333" />
    <circle cx="81" cy="69" r="5" fill="#ddd" stroke="#333" strokeWidth="2" />
    <path d="M69 55c2-12 18-12 20 0" stroke="#222" strokeWidth="3" />
    <path d="M81 72v12" stroke="#888" strokeWidth="3" />
  </Svg>
);

const ZipFile = () => (
  <Svg w={100} vb="0 0 100 100">
    <rect x="4" y="6" width="92" height="78" rx="8" fill="#3f9ad6" />
    <path d="M64 8h26v12H64z" fill="#eee" />
    <rect x="4" y="18" width="92" height="66" rx="8" fill="#78c3f2" />
    <path d="M12 6h48l27 28v72H12z" fill="#f7f7f7" />
    <path d="M60 6l27 28H66q-6 0-6-6z" fill="#dcdcdc" />
    <path d="M50 6v54" stroke="#3a3f44" strokeWidth="11" />
    <path d="M50 6v54" stroke="#b9c2c8" strokeWidth="5" strokeDasharray="2 2" />
    <SvgText x="50" y="98" fontSize="16" fill="#777">ZIP</SvgText>
  </Svg>
);

const Trash = () => (
  <Svg w={100} vb="0 0 100 100">
    <ellipse cx="50" cy="6" rx="43" ry="12" fill="#c9c9c9" />
    <path d="M14 8l8-16 10 8 4-10 12 12 8-10 8 12 16-2 4 10z" fill="#f1f1f1" />
    <path d="M30 10l6-12 8 10zM56 10l8-12 10 14z" fill="#55504d" />
    <circle cx="44" cy="5" r="5" fill="#46a9a0" />
    <path d="M50 12l10-6 4 10z" fill="#d2693c" />
    <path d="M7 6q43 20 86 0l-11 84q-2 14-32 14T18 90z" fill="#dedede" />
    <path d="M7 6q43 20 86 0l-1 7q-42 18-84 0z" fill="#efefef" />
    <path d="M27 28l5 62M72 28l-5 62" stroke="#d3d3d3" strokeWidth="8" />
  </Svg>
);

/* ---------- data ---------- */

const menus = ["Chrome", "Archivo", "Edición", "Visualización", "Historial", "Favoritos", "Perfiles", "Pestaña", "Ventana", "Ayuda"];

const tabs: { title: string; icon: React.ReactNode; active?: boolean }[] = [
  { title: "Noved", icon: <FaChrome size={28} color="#3c4043" /> },
  { title: "¡Proba", icon: <YouTubeMark /> },
  { title: "Unitre", icon: <UnitreeMark /> },
  { title: "Times", icon: <YouTubeMark /> },
  { title: "Voliro", icon: <VoliroMark /> },
  { title: "Elios 3", icon: <EliosMark /> },
  { title: "Home", icon: <HomeMark /> },
  { title: "Clave", icon: <ClaveMark /> },
  { title: ".:: REC", icon: <ClaveMark /> },
  { title: ".:: REC", icon: <ClaveMark /> },
  { title: "regist", icon: <GlobeRing /> },
  { title: "c_25-", icon: <DocMark /> },
  { title: "SAP E", icon: <Globe /> },
  { title: "Webs", icon: <ReplitTab /> },
  { title: "Ir", icon: <Globe />, active: true },
  { title: "ChatG", icon: <Gpt /> },
  { title: "Rodpa", icon: <FaGithub size={32} color="#24292f" /> },
  { title: "Jean-", icon: <JeanMark /> },
  { title: "receta", icon: <Cloudinary /> },
];

const bookmarks: [string, React.ReactNode][] = [
  ["DF", <DfMark />],
  ["L", <FaLinkedin size={31} color="#2a66b8" />],
  ["OB", <FlameMark />],
  ["Drive", <DriveMark />],
  ["Photos", <PhotosMark />],
  ["F", <FeedlyMark />],
  ["WN", <CircuitMark />],
  ["YT", <YouTubeMark />],
  ["MIT", <MitMark />],
  ["AD", <AzureMark />],
  ["GAD", <HexMark />],
  ["GPT", <Gpt />],
  ["AE", <AeMark />],
  ["Claude", <ClaudeMark />],
  ["Bolt", <BoltMark />],
  ["G", <GeminiMark />],
  ["Replit", <Replit />],
  ["Grok", <GrokMark />],
  ["CPP", <CpMark />],
  ["Abacus", <AbacusMark />],
  ["FM", <FigmaMark />],
  ["Genspark", <GensparkMark />],
  ["Cloudinary", <Cloudinary />],
];

const milestones = [
  { year: "2020", title: "Fundación de Invenor", text: "Inicio de operaciones con foco en activos estratégicos del norte" },
  { year: "2021", title: "Primera Adquisición", text: "Adquisición de 150 estaciones ferroviarias estratégicas" },
  { year: "2022", title: "Expansión del Portafolio", text: "Incorporación de terrenos industriales y red de fibra óptica" },
];

const fileLabels: [string, number, number][] = [
  ["8", 462, 22],
  ["J", 497, 22],
  ["g", 1166, 18],
  ["j", 1357, 18],
  ["j", 1582, 22],
];

const apps: { name: string; icon: React.ReactNode; open?: boolean; badge?: string }[] = [
  { name: "Finder", icon: <Finder />, open: true },
  { name: "Launchpad", icon: <Launchpad /> },
  { name: "Chrome", icon: <ChromeApp />, open: true },
  { name: "Safari", icon: <Safari /> },
  { name: "Mail", icon: <Mail /> },
  { name: "Calendario", icon: <CalendarApp /> },
  { name: "Notas", icon: <Notes /> },
  { name: "Keynote", icon: <Keynote /> },
  { name: "Ajustes", icon: <Settings />, open: true, badge: "1" },
  { name: "Spotify", icon: <Spotify /> },
  { name: "Outlook", icon: <Outlook /> },
  { name: "Excel", icon: <Office id="excel" letter="X" tag="#2b7340" rows={["#52b57c", "#44985f", "#357a45", "#2a5a38"]} /> },
  { name: "WhatsApp", icon: <Whatsapp />, open: true },
  { name: "Word", icon: <Office id="word" letter="W" tag="#2351ae" rows={["#5aa0e6", "#3f77cf", "#2a57b8", "#1c3b88"]} /> },
  { name: "Notion Calendar", icon: <NotionCalendar /> },
  { name: "Grabadora", icon: <RingApp /> },
  { name: "Duplicado del iPhone", icon: <Mirroring /> },
  { name: "Replit", icon: <ReplitApp /> },
];

const recents: { name: string; icon: React.ReactNode }[] = [
  { name: "Webex", icon: <Webex /> },
  { name: "Vista Previa", icon: <Preview /> },
  { name: "Utilidad de Discos", icon: <DiskUtility /> },
];

/* ---------- app ---------- */

export default function App() {
  const activeIndex = tabs.findIndex((t) => t.active);
  return (
    <Desktop>
      <Global />
      {fileLabels.map(([t, y, r]) => (
        <FileLabel key={y} $y={y} $right={r}>{t}</FileLabel>
      ))}

      <MenuBar>
        <Menus>
          <FaApple size={31} />
          {menus.map((m, i) => (
            <MenuButton key={m} $bold={i === 0}>{m}</MenuButton>
          ))}
        </Menus>
        <Status>
          <Wave />
          <Frames />
          <DriveTray />
          <Volume />
          <FaBluetoothB size={30} />
          <InputSource>ES</InputSource>
          <Battery>
            100%
            <BatteryIcon />
          </Battery>
          <Wifi />
          <Search size={30} strokeWidth={2} />
          <Toggles />
          <Clock>{"Dom may 25  20:03"}</Clock>
        </Status>
      </MenuBar>

      <Window>
        <TabStrip>
          <Lights>
            <Light $c="#ec6a5e" aria-label="Cerrar" />
            <Light $c="#f4bf4f" aria-label="Minimizar" />
            <Light $c="#61c554" aria-label="Ampliar" />
          </Lights>
          <Tabs role="tablist">
            {tabs.map((t, i) => (
              <TabCell key={i}>
                {t.active && <Flare $side="left" />}
                <Tab
                  role="tab"
                  aria-selected={!!t.active}
                  $active={t.active}
                  $line={!t.active && i !== activeIndex - 1}
                >
                  <Favicon>{t.icon}</Favicon>
                  {t.active ? <ShortTitle>{t.title}</ShortTitle> : <TabTitle>{t.title}</TabTitle>}
                  {t.active && <X size={28} />}
                </Tab>
                {t.active && <Flare $side="right" />}
              </TabCell>
            ))}
          </Tabs>
          <StripButton aria-label="Nueva pestaña">
            <Plus size={30} strokeWidth={2} />
          </StripButton>
          <StripButton $filled aria-label="Buscar pestañas">
            <ChevronDown size={26} strokeWidth={3} />
          </StripButton>
        </TabStrip>

        <Chrome>
          <Toolbar>
            <NavButtons>
              <ToolButton aria-label="Atrás"><ArrowLeft size={34} /></ToolButton>
              <ToolButton $dim aria-label="Adelante"><ArrowRight size={34} /></ToolButton>
              <ToolButton aria-label="Recargar"><RotateCw size={28} strokeWidth={3} /></ToolButton>
            </NavButtons>
            <UrlBar>
              <SiteInfo aria-label="Información del sitio"><Tune /></SiteInfo>
              <UrlInput
                aria-label="Dirección"
                defaultValue="939e9f70-3a11-424c-b3f1-851ebe369402-00-d5aozswkg5ls.worf.replit.dev"
              />
              <UrlPath>/about</UrlPath>
              <ToolButton aria-label="Añadir a favoritos"><Star size={34} color="#66686b" /></ToolButton>
            </UrlBar>
            <ToolRight>
              <ToolButton aria-label="Extensiones"><Puzzle /></ToolButton>
              <Divider />
              <ToolButton aria-label="Perfil"><Portrait /></ToolButton>
              <ToolButton aria-label="Menú"><Kebab /></ToolButton>
            </ToolRight>
          </Toolbar>
          <Bookmarks>
            <button aria-label="Grupos"><Apps /></button>
            <Divider />
            <BookmarkList>
              {bookmarks.map(([name, icon]) => (
                <Bookmark key={name} href="#">
                  <Favicon>{icon}</Favicon>
                  {name}
                </Bookmark>
              ))}
            </BookmarkList>
            <button aria-label="Más favoritos">
              <Svg w={24} vb="0 0 24 24">
                <path d="M3 4l8 8-8 8M12 4l8 8-8 8" stroke="#202124" strokeWidth="3" />
              </Svg>
            </button>
          </Bookmarks>
        </Chrome>

        <Page>
          <SiteHeader>
            <HeaderInner>
              <Brand>
                <BrandMark />
                <SiteNav>
                  <NavLink href="#">Inicio</NavLink>
                  <NavLink href="#" $active>Quiénes Somos</NavLink>
                  <NavLink href="#">Oportunidades</NavLink>
                  <NavLink href="#">Proyecciones</NavLink>
                  <NavLink href="#">Contacto</NavLink>
                </SiteNav>
              </Brand>
              <HeaderTools>
                <IconButton aria-label="Buscar"><Search size={32} /></IconButton>
                <IconButton aria-label="Tema oscuro"><Moon size={32} /></IconButton>
              </HeaderTools>
            </HeaderInner>
          </SiteHeader>
          <Section>
            <Heading>Nuestro <Accent>Recorrido</Accent></Heading>
            <Lead>Un track record sólido de crecimiento y desarrollo en el sector de activos estratégicos</Lead>
            <Timeline>
              {milestones.map((m, i) => (
                <Milestone key={m.year} $right={i % 2 === 1}>
                  <Card>
                    <CardTop>
                      <IconTile><Calendar size={32} /></IconTile>
                      <Year>{m.year}</Year>
                    </CardTop>
                    <CardTitle>{m.title}</CardTitle>
                    <CardText>{m.text}</CardText>
                  </Card>
                  <Dot />
                </Milestone>
              ))}
            </Timeline>
          </Section>
          <TopRing>
            <TopButton aria-label="Volver arriba"><ArrowUp size={32} strokeWidth={2} /></TopButton>
          </TopRing>
        </Page>
      </Window>

      <Dock>
        {apps.map((a) => (
          <DockItem key={a.name} aria-label={a.name} $open={a.open}>
            {a.icon}
            {a.badge && <Badge>{a.badge}</Badge>}
          </DockItem>
        ))}
        <DockRule />
        {recents.map((a) => (
          <DockItem key={a.name} aria-label={a.name}>{a.icon}</DockItem>
        ))}
        <DockRule />
        <DockItem aria-label="Archivo ZIP"><ZipFile /></DockItem>
        <DockItem aria-label="Papelera"><Trash /></DockItem>
      </Dock>
    </Desktop>
  );
}
